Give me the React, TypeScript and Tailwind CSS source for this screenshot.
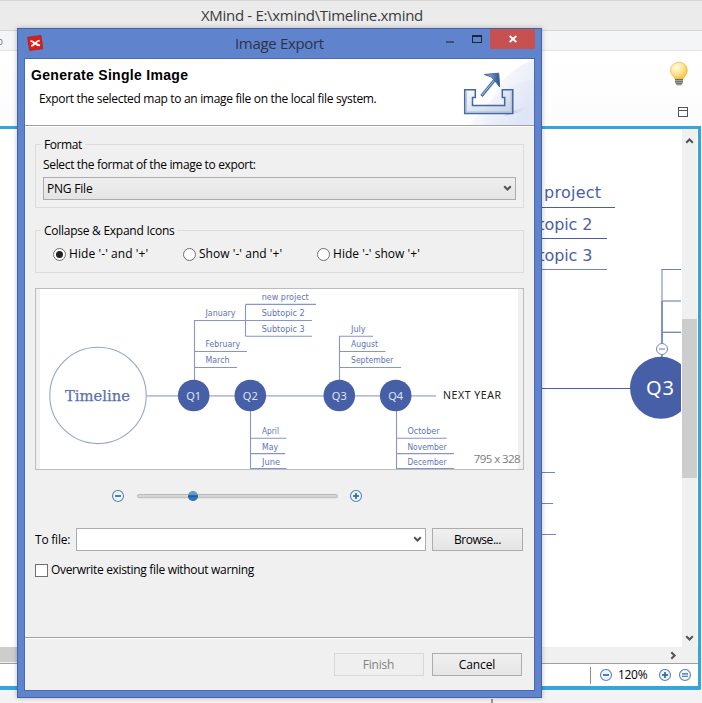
import React from 'react';

const UI = "font-['Open_Sans','Noto_Sans',sans-serif]";

function RoundIcon({ kind }: { kind: 'minus' | 'plus' | 'equals' }) {
  return (
    <svg width="13" height="13" viewBox="0 0 13 13" className="block shrink-0">
      <circle cx="6" cy="6" r="5.5" fill="#eaf8fd" stroke="#6482b8" strokeWidth="1.1" />
      {kind === 'equals' ? (
        <path d="M3 4.9h6M3 7.2h6" stroke="#3c669f" strokeWidth="1.1" />
      ) : (
        <path d="M3 6h6" stroke="#3c669f" strokeWidth="1.7" />
      )}
      {kind === 'plus' && <path d="M6 3v6" stroke="#3c669f" strokeWidth="1.7" />}
    </svg>
  );
}

function Chevron({ className = '' }: { className?: string }) {
  return (
    <svg width="9" height="7" viewBox="0 0 9 7" className={`block shrink-0 ${className}`}>
      <path d="M1.2 1.3L4.5 4.6L7.8 1.3" fill="none" stroke="#555" strokeWidth="2.1" />
    </svg>
  );
}

function Radio({ on, label, className }: { on?: boolean; label: string; className: string }) {
  return (
    <div className={`flex items-center gap-[3px] ${className}`}>
      <span className="flex size-[13px] items-center justify-center rounded-full border border-[#707070] bg-white">
        {on && <span className="size-[7px] rounded-full bg-[#222]" />}
      </span>
      <span className="whitespace-pre">{label}</span>
    </div>
  );
}

type Label = [string, number, number, number];

const months: Label[] = [
  ['January', 205.5, 316, 30],
  ['February', 205.5, 347.3, 34.5],
  ['March', 205.5, 363, 24],
  ['new project', 261.7, 300, 47],
  ['Subtopic 2', 261.7, 316, 43],
  ['Subtopic 3', 261.7, 331.7, 43],
  ['July', 351, 331.7, 14.5],
  ['August', 351, 347.3, 27],
  ['September', 351, 363, 42.5],
  ['April', 262, 434, 17],
  ['May', 262, 449.6, 16],
  ['June', 262, 465.3, 18],
  ['October', 407.5, 434, 32],
  ['November', 407.5, 449.6, 39],
  ['December', 407.5, 465.3, 39],
];

const quarters: [string, number][] = [
  ['Q1', 193.7],
  ['Q2', 250.3],
  ['Q3', 339.3],
  ['Q4', 395.7],
];

function Preview() {
  return (
    <svg width="487" height="180" viewBox="36 289 487 180" className="block">
      <rect x="40" y="289" width="478" height="180" fill="#fff" />
      <g fill="none" stroke="#8795c8" strokeWidth="1.1">
        <path d="M194.5 380V320.5H312M194.5 351.5H247M194.5 367.5H237" />
        <path d="M245.5 304.5V336.3M245.5 304.4H316M245.5 336.3H312" />
        <path d="M339.5 380V336.3H373M339.5 351.5H385.5M339.5 367.5H401" />
        <path d="M250.5 411V469M250.5 438.3H286.5M250.5 453.6H285M250.5 468.6H286.5" />
        <path d="M396.5 411V469M396.5 438.3H446.7M396.5 453.6H454M396.5 468.6H454" />
      </g>
      <path d="M146.5 395.8H436" stroke="#b4bfdf" strokeWidth="1.8" />
      <circle cx="98" cy="395.4" r="48.2" fill="#fff" stroke="#98a4cf" strokeWidth="1.1" />
      <text x="65" y="400.5" textLength="65" lengthAdjust="spacingAndGlyphs" strokeWidth="0.25" className="fill-[#5a70b0] stroke-[#5a70b0] font-['DejaVu_Serif',serif] text-[15px]">Timeline</text>
      {quarters.map(([q, x]) => (
        <g key={q}>
          <circle cx={x} cy="395.5" r="15.8" fill="#475fa6" />
          <text x={x} y="399.6" textAnchor="middle" className="fill-[#dfe5f5] font-['Noto_Sans',sans-serif] text-[11px]">{q}</text>
        </g>
      ))}
      {months.map(([t, x, y, w]) => (
        <text key={t} x={x} y={y} textLength={w} lengthAdjust="spacingAndGlyphs" className="fill-[#5f73b5] font-['DejaVu_Sans',sans-serif] text-[8px]">{t}</text>
      ))}
      <text x="443" y="399" textLength="58" className="fill-[#222] font-['Noto_Sans',sans-serif] text-[10.5px]">NEXT YEAR</text>
      <text x="473.7" y="463" textLength="47" className="fill-[#7c7c7c] font-['Open_Sans',sans-serif] text-[11.5px]">795 x 328</text>
    </svg>
  );
}

function Canvas() {
  return (
    <svg width="682" height="518" viewBox="0 129 682 518" className="block bg-white">
      <g className="fill-[#4a60a6] font-['DejaVu_Sans',sans-serif] text-[16px]">
        <text x="505" y="198" textLength="96">new project</text>
        <text x="508" y="230" textLength="84.5">Subtopic 2</text>
        <text x="508" y="261" textLength="84.5">Subtopic 3</text>
      </g>
      <g fill="none" stroke="#475fa6">
        <path d="M500 207.5H615M500 238.5H607M500 388.5H630" />
        <path d="M500 269.5H607" stroke="#7184bf" />
        <path d="M500 472.5H555M500 503.5H553M500 534.5H556" stroke="#7184bf" />
        <path d="M662 301V269" stroke="#a5b0d6" strokeWidth="1.6" />
        <path d="M661.5 269.5H681" stroke="#6c80bb" />
        <path d="M662 301H681" stroke="#9daad3" strokeWidth="1.7" />
        <path d="M662 301V357" stroke="#6a7ebb" strokeWidth="1.7" />
        <path d="M662 332.3H681" stroke="#7c8dc3" strokeWidth="1.4" />
      </g>
      <circle cx="662" cy="349" r="5.5" fill="#fff" stroke="#7587bd" />
      <path d="M659 349H665" stroke="#8d9bca" strokeWidth="1.4" />
      <circle cx="661" cy="387.8" r="31" fill="#475fa6" />
      <text x="646" y="395" textLength="28" className="fill-white font-['Noto_Sans',sans-serif] text-[20px]">Q3</text>
      <path d="M681.5 129V647" stroke="#fff" />
    </svg>
  );
}

function ExportArt() {
  return (
    <svg width="84" height="66" viewBox="450 59 84 66" className="block">
      <defs>
        <linearGradient id="sweep" x1="0" y1="0" x2="1" y2="0.5">
          <stop offset="0" stopColor="#fff" />
          <stop offset="1" stopColor="#dbe2f5" />
        </linearGradient>
        <linearGradient id="tray" x1="0" y1="0" x2="1" y2="1">
          <stop offset="0" stopColor="#f7fafe" />
          <stop offset="1" stopColor="#c5d0e6" />
        </linearGradient>
        <linearGradient id="head" x1="0" y1="0" x2="1" y2="0">
          <stop offset="0" stopColor="#b8cbe4" />
          <stop offset="1" stopColor="#24508e" />
        </linearGradient>
        <linearGradient id="shade" x1="0" y1="0" x2="1" y2="0">
          <stop offset="0" stopColor="#bfaebb" />
          <stop offset="1" stopColor="#dfe4f3" stopOpacity="0" />
        </linearGradient>
      </defs>
      <path d="M534 60Q495 72 484 125H534Z" fill="url(#sweep)" opacity="0.65" />
      <path d="M534 79Q494 87 470 125H534Z" fill="url(#sweep)" opacity="0.7" />
      <path d="M510 112L530 105Q528 110 517 113L504 116Z" fill="url(#shade)" />
      <path d="M464.7 89.7H475.3V97.5H472.5V105.5H504.7V97.5H502.3V89.7H512.8V113.6H464.7Z" fill="url(#tray)" stroke="#4469a0" strokeWidth="1.5" />
      <path d="M466.300 91.300V112H511.200V91.300" fill="none" stroke="#a9bcd9" strokeWidth="1" />
      <path d="M481.5 96L495 79.5" stroke="#4c70a4" strokeWidth="3" />
      <path d="M482 95L495 79.5" stroke="#b6c7df" strokeWidth="1" />
      <path d="M484.3 74.5L498.7 73.2L499.7 87L495 81L491.5 77Z" fill="url(#head)" stroke="#42689f" strokeWidth="1" />
    </svg>
  );
}

function Dialog() {
  return (
    <div className="absolute left-[17px] top-[28px] flex h-[670px] w-[525px] flex-col border border-[#4562a6] bg-[#5f83cd] shadow-[0_0_5px_rgba(0,0,0,0.25)]">
      <div className="flex h-[29px] shrink-0 items-start">
        <svg width="17" height="17" viewBox="0 0 17 17" className="ml-[9px] mt-[6px] block shrink-0">
          <path d="M.6 2.2L14 .5L15.8 13.8L2.5 15.5Z" fill="#dc1d12" stroke="#a91f24" strokeWidth="0.7" />
          <path d="M3.5 5.2Q5.5 4.8 8 7.2Q10 4.7 12.8 4.7L12.5 6.5Q10.7 6.7 9.7 8Q11 9.3 13.3 9.6L12.7 11.3Q10 11.3 8.2 9.4Q6.6 11.7 4.2 11.8L4 10Q5.7 9.6 6.4 8.2Q5.2 7 3.5 7Z" fill="#fff" />
        </svg>
        <div className={`${UI} ml-[191px] mt-[4px] w-[100px] whitespace-nowrap text-[15px] leading-[20px] tracking-[-0.33px] text-[#2d3347]`}>Image Export</div>
        <div className="ml-[111px] mt-[12px] h-[2px] w-[8px] bg-[#3f4f78]" />
        <div className="ml-[18px] mt-[6px] h-[8px] w-[10px] border border-t-2 border-[#1f2636]" />
        <div className="ml-auto mr-[6px] flex h-[20px] w-[45px] items-center justify-center bg-[#c75050]">
          <svg width="8" height="8" viewBox="0 0 8 8"><path d="M.7 1L7.3 7M7.3 1L.7 7" stroke="#fff" strokeWidth="1.8" /></svg>
        </div>
      </div>
      <div className={`${UI} mx-[6px] mb-[6px] flex min-h-0 flex-1 flex-col border border-[#4b69af] bg-[#f0f0f0] text-[12px] leading-[16px] text-black`}>
        <div className="flex h-[68px] shrink-0 border-b border-white">
          <div className="flex flex-1 justify-between border-b border-[#a0a0a0] bg-white">
            <div>
              <div className="ml-[6px] mt-[7px] whitespace-nowrap font-['Liberation_Sans',sans-serif] text-[14px] font-bold leading-[18px] tracking-[0.3px]">Generate Single Image</div>
              <div className="ml-[14px] mt-[7px] whitespace-nowrap tracking-[-0.32px]">Export the selected map to an image file on the local file system.</div>
            </div>
            <ExportArt />
          </div>
        </div>

        <fieldset className="ml-[10px] mt-[9px] h-[72px] w-[489px] shrink-0 border border-[#dcdcdc]">
          <legend className="ml-[5px] h-[17px] px-[3px] leading-[17px] tracking-[-0.4px]">Format</legend>
          <div className="ml-[7px] mt-[4px] tracking-[-0.34px]">Select the format of the image to export:</div>
          <div className="ml-[7px] mt-[4px] flex h-[23px] w-[473px] items-center justify-between border border-[#acacac] bg-linear-to-b from-[#efefef] to-[#e4e4e4] pl-[3px] pr-[3px]">
            <span className="tracking-[-0.2px]">PNG File</span>
            <Chevron />
          </div>
        </fieldset>

        <fieldset className="ml-[10px] mt-[14px] h-[51px] w-[489px] shrink-0 border border-[#dcdcdc]">
          <legend className="ml-[5px] h-[17px] px-[3px] leading-[17px] tracking-[-0.26px]">Collapse &amp; Expand Icons</legend>
          <div className="mt-[7px] flex pl-[17px]">
            <Radio on label="Hide '-' and '+'" className="w-[130px] tracking-[0.08px]" />
            <Radio label="Show '-' and '+'" className="w-[134px] tracking-[0.04px]" />
            <Radio label="Hide '-' show '+'" className="w-[130px] tracking-[0.04px]" />
          </div>
        </fieldset>

        <div className="ml-[10px] mt-[15px] h-[182px] w-[489px] shrink-0 border border-[#bcbcbc]">
          <Preview />
        </div>

        <div className="ml-[87px] mt-[20px] flex h-[13px] shrink-0 items-center">
          <RoundIcon kind="minus" />
          <svg width="201" height="13" viewBox="0 0 201 13" className="mx-[12px] block">
            <rect x="0.5" y="4.5" width="200" height="3.2" rx="1.6" fill="#d6d6d6" stroke="#b5b5b5" strokeWidth="0.9" />
            <circle cx="56" cy="6" r="5" fill="#6599c8" />
            <path d="M51 6H61A5 5 0 0 1 51 6Z" fill="#2d76b5" />
            <path d="M51.3 6H60.7" stroke="#185a9a" strokeWidth="1.5" />
          </svg>
          <RoundIcon kind="plus" />
        </div>

        <div className="ml-[10px] mt-[25px] flex h-[23px] shrink-0 items-center">
          <span className="w-[41px] tracking-[-0.22px]">To file:</span>
          <div className="flex h-[23px] w-[350px] items-center justify-end border border-[#abadb3] bg-white pr-[3px]">
            <Chevron />
          </div>
          <div className="ml-[6px] flex h-[23px] w-[91px] items-center justify-center border border-[#acacac] bg-linear-to-b from-[#f0f0f0] to-[#e5e5e5] tracking-[-0.45px]">Browse...</div>
        </div>

        <div className="ml-[10px] mt-[11px] flex h-[16px] shrink-0 items-center">
          <span className="size-[13px] border border-[#707070] bg-white" />
          <span className="ml-[3px] tracking-[-0.32px]">Overwrite existing file without warning</span>
        </div>

        <div className="mt-auto flex h-[53px] shrink-0 justify-end border-t border-[#a0a0a0]">
          <div className="flex flex-1 justify-end gap-[8px] border-t border-white pr-[12px] pt-[14px]">
            <div className="flex h-[23px] w-[90px] items-center justify-center border border-[#d9d9d9] bg-[#efefef] pr-px tracking-[-0.2px] text-[#838383]">Finish</div>
            <div className="flex h-[23px] w-[90px] items-center justify-center border border-[#acacac] bg-linear-to-b from-[#f0f0f0] to-[#e5e5e5] tracking-[-0.12px]">Cancel</div>
          </div>
        </div>
      </div>
    </div>
  );
}

export default function App() {
  return (
    <div className={`${UI} relative flex h-[703px] w-[702px] flex-col overflow-hidden bg-[#f3f3f3]`}>
      <div className="h-[31px] shrink-0 border-b border-t border-[#d4d4d4] bg-[#ebebeb] pl-[201px] pt-[4px] text-[15px] leading-[20px] tracking-[-0.31px] whitespace-nowrap text-[#3b3b3b]">
        XMind - E:\xmind\Timeline.xmind
      </div>
      <div className="h-[20px] shrink-0 overflow-hidden border-b border-[#e4e4e4] bg-[#f4f5f7] text-[10px] leading-[21px] text-[#777]">
        <span className="ml-[-3px]">o</span>
      </div>
      <div className="flex h-[75px] shrink-0 flex-col items-end bg-linear-to-b from-white to-[#fcfcfc]">
        <svg width="20" height="26" viewBox="0 0 20 26" className="mr-[13px] mt-[10px] block">
          <defs>
            <radialGradient id="bulb" cx="0.35" cy="0.3" r="0.75">
              <stop offset="0" stopColor="#fffbe2" />
              <stop offset="0.55" stopColor="#ffe493" />
              <stop offset="1" stopColor="#f8bd2e" />
            </radialGradient>
          </defs>
          <path d="M10 1.3C5 1.3 1.6 5 1.6 9.5C1.6 14 5.5 15.5 6 18H14C14.5 15.5 18.2 14 18.2 9.5C18.2 5 15 1.3 10 1.3Z" fill="url(#bulb)" stroke="#eeb64a" strokeWidth="0.8" />
          <path d="M6 18H14V22L12 24.5H8L6 22Z" fill="#a5a5a5" />
          <path d="M6 18.5H14M6 20.6H14M7 22.7H13" stroke="#646464" strokeWidth="0.9" />
        </svg>
        <div className="mr-[14px] mt-[20px] h-[10px] w-[10px] border border-[#555]">
          <div className="mt-[2px] h-px bg-[#555]" />
        </div>
      </div>
      <div className="flex h-[564px] w-[701px] shrink-0 flex-col rounded-br-[2px] border-b-4 border-r-[3px] border-t-[3px] border-[#35a6da] bg-white">
        <div className="flex h-[518px] shrink-0">
          <Canvas />
          <div className="flex w-[15px] flex-col items-center bg-[#f0f0f0]">
            <Chevron className="mt-[8px] rotate-180" />
            <div className="mt-[175px] h-[159px] w-[15px] bg-[#cdcdcd]" />
            <Chevron className="mb-[5px] mt-auto" />
          </div>
        </div>
        <div className="flex h-[17px] shrink-0 items-center border-b border-[#a0a0a0] bg-[#f0f0f0]">
          <div className="h-[15px] w-[30px] self-start bg-[#cdcdcd]" />
          <Chevron className="ml-[639px] -rotate-90" />
        </div>
        <div className="flex min-h-0 flex-1 items-center pl-[590px]">
          <div className="h-[17px] w-px bg-[#8c8c8c]" />
          <div className="ml-[9px]"><RoundIcon kind="minus" /></div>
          <span className="ml-[5px] w-[41px] text-[12px] leading-[16px] tracking-[-0.3px]">120%</span>
          <RoundIcon kind="plus" />
          <div className="ml-[7px]"><RoundIcon kind="equals" /></div>
        </div>
      </div>
      <div className="ml-[491px] mt-[9px] h-[4px] w-[2px] bg-[#999]" />
      <Dialog />
    </div>
  );
}
